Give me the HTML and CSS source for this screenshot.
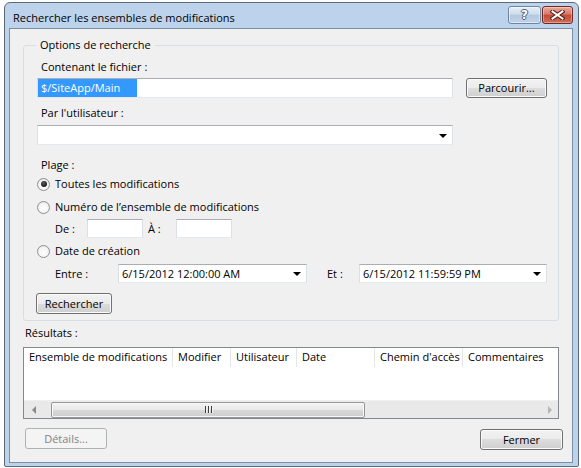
FILE: index.html
```html
<!DOCTYPE html>
<html lang="fr">
<head>
<meta charset="utf-8">
<title>Rechercher les ensembles de modifications</title>
<link rel="stylesheet" href="styles.css">
</head>
<body>
<div class="window">
  <div class="titlebar">
    <span class="title">Rechercher les ensembles de modifications</span>
    <div class="caption">
      <div class="cbtn help"><span class="qmark">?</span></div>
      <div class="cbtn close">
        <svg width="15" height="10" viewBox="0 0 15 10"><path d="M2.5 1.5 L12.5 8.5 M12.5 1.5 L2.5 8.5" stroke="#5a1f18" stroke-width="4" stroke-linecap="square"/><path d="M2.5 1.5 L12.5 8.5 M12.5 1.5 L2.5 8.5" stroke="#ffffff" stroke-width="2" stroke-linecap="square"/></svg>
      </div>
    </div>
  </div>
  <div class="client">
    <fieldset class="group">
      <legend>Options de recherche</legend>
      <div class="lbl first">Contenant le fichier :</div>
      <div class="row file-row">
        <div class="textbox wide"><span class="sel">$/SiteApp/Main</span></div>
        <div class="btn browse">Parcourir...</div>
      </div>
      <div class="lbl second">Par l'utilisateur :</div>
      <div class="combo wide user-combo"><span class="val"></span><span class="arrow"></span></div>
      <div class="lbl plage">Plage :</div>
      <div class="radio-row r1"><span class="radio checked"></span><span>Toutes les modifications</span></div>
      <div class="radio-row r2"><span class="radio"></span><span>Numéro de l’ensemble de modifications</span></div>
      <div class="row sub-row de-row">
        <span class="sublbl de">De :</span>
        <div class="textbox small"></div>
        <span class="sublbl a">À :</span>
        <div class="textbox small"></div>
      </div>
      <div class="radio-row r3"><span class="radio"></span><span>Date de création</span></div>
      <div class="row sub-row date-row">
        <span class="sublbl entre">Entre :</span>
        <div class="combo date1"><span class="val">6/15/2012 12:00:00 AM</span><span class="arrow"></span></div>
        <span class="sublbl et">Et :</span>
        <div class="combo date2"><span class="val">6/15/2012 11:59:59 PM</span><span class="arrow"></span></div>
      </div>
      <div class="btn search">Rechercher</div>
    </fieldset>
    <div class="results-lbl">Résultats :</div>
    <div class="listview">
      <div class="lv-header">
        <div class="col c1">Ensemble de modifications</div>
        <div class="col c2">Modifier</div>
        <div class="col c3">Utilisateur</div>
        <div class="col c4">Date</div>
        <div class="col c5">Chemin d'accès</div>
        <div class="col c6">Commentaires</div>
      </div>
      <div class="lv-body"></div>
      <div class="hscroll">
        <div class="sarrow left"><span class="tri-left"></span></div>
        <div class="strack">
          <div class="thumb"><span class="grip"><i></i><i></i><i></i></span></div>
        </div>
        <div class="sarrow right"><span class="tri-right"></span></div>
      </div>
    </div>
    <div class="bottom-row">
      <div class="btn details disabled">Détails...</div>
      <div class="btn close-btn">Fermer</div>
    </div>
  </div>
</div>
</body>
</html>
```
FILE: styles.css
```css
* { box-sizing: border-box; }
html, body { margin: 0; padding: 0; background: #ffffff; }
body {
  font-family: "Open Sans", "Noto Sans", "DejaVu Sans", sans-serif;
  font-size: 11px;
  color: #000;
  line-height: 16px;
}

.window {
  margin: 2px 0 0 4px;
  width: 575px;
  height: 465px;
  border: 1px solid #5d6a79;
  border-radius: 6px 6px 2px 2px;
  background: #bdd3ec;
  padding: 0 5px 3px 4px;
  display: flex;
  flex-direction: column;
}

.titlebar {
  height: 25px;
  display: flex;
  align-items: flex-start;
  padding-left: 4px;
  flex: none;
}
.title { margin-top: 7px; white-space: nowrap; font-size: 11px; }
.caption { margin-left: auto; display: flex; gap: 1px; margin-top: 3px; }
.cbtn {
  height: 18px;
  border-radius: 3px;
  display: flex;
  align-items: center;
  justify-content: center;
}
.help {
  width: 33px;
  border: 1px solid #6f86a3;
  background: linear-gradient(#e6eef8 0%, #cfdcec 45%, #b4c8e0 50%, #bfd2e9 100%);
  box-shadow: inset 0 0 0 1px rgba(255,255,255,0.5);
}
.qmark {
  font-family: "DejaVu Sans", sans-serif;
  font-weight: bold;
  font-size: 12px;
  line-height: 14px;
  color: #ffffff;
  text-shadow: 1px 0 0 #4c5d73, -1px 0 0 #4c5d73, 0 1px 0 #4c5d73, 0 -1px 0 #4c5d73;
}
.close {
  width: 31px;
  border: 1px solid #6e2a22;
  background: linear-gradient(#e9a99c 0%, #d7796a 45%, #c44a38 50%, #cf6e56 100%);
  box-shadow: inset 0 0 0 1px rgba(255,255,255,0.35);
}
.close svg { display: block; }

.client {
  flex: 1;
  background: #f0f0f0;
  border: 1px solid #7d8fa6;
  display: flex;
  flex-direction: column;
  align-items: flex-start;
}

/* group box */
.group {
  margin: 8px 0 0 13px;
  width: 536px;
  border: 1px solid #d5dfe5;
  border-radius: 3px;
  padding: 0 0 6px 13px;
  min-width: 0;
}
.group legend {
  margin-left: -1px;
  padding: 0 4px;
  line-height: 16px;
}

.lbl { padding-left: 4px; line-height: 16px; }
.lbl.first { margin-top: 6px; }
.lbl.second { margin-top: 7px; }
.lbl.plage { margin-top: 12px; }

.row { display: flex; align-items: center; }
.file-row { margin-top: 3px; }

.textbox {
  height: 20px;
  background: #fff;
  border: 1px solid #e3e9ef;
  border-top-color: #abadb3;
  border-left-color: #dbdfe6;
  border-right-color: #dbdfe6;
}
.textbox.wide { width: 416px; }
.sel {
  display: inline-block;
  width: 99px;
  height: 18px;
  line-height: 18px;
  padding-left: 3px;
  background: #3399ff;
  color: #fff;
}

.btn {
  height: 21px;
  border: 1px solid #707070;
  border-radius: 3px;
  background: linear-gradient(#f2f2f2 0%, #ebebeb 50%, #dddddd 50%, #cfcfcf 100%);
  box-shadow: inset 0 0 0 1px #fbfbfb;
  display: flex;
  align-items: center;
  justify-content: center;
  line-height: 16px;
}
.browse { width: 81px; margin-left: 13px; height: 20px; margin-top: -1px; }

.combo {
  position: relative;
  height: 20px;
  background: #fff;
  border: 1px solid #e3e9ef;
  border-top-color: #abadb3;
  border-left-color: #dbdfe6;
  border-right-color: #dbdfe6;
  display: flex;
  align-items: center;
}
.combo.wide { width: 416px; }
.user-combo { margin-top: 4px; }
.combo .val { padding-left: 3px; flex: 1; white-space: nowrap; }
.arrow {
  width: 0; height: 0;
  border-left: 4px solid transparent;
  border-right: 4px solid transparent;
  border-top: 4px solid #000;
  margin-right: 5px;
  margin-top: 1px;
}

.radio-row { display: flex; align-items: center; height: 16px; }
.r1 { margin-top: 3px; }
.r2 { margin-top: 7px; }
.r3 { margin-top: 5px; }
.radio {
  width: 13px;
  height: 13px;
  border-radius: 50%;
  border: 1px solid #8c8f94;
  background: radial-gradient(circle at 50% 60%, #fefefe 0%, #f4f4f4 55%, #dcdcdc 100%);
  margin-right: 5px;
  display: flex;
  align-items: center;
  justify-content: center;
  flex: none;
}
.radio.checked::after {
  content: "";
  width: 6px;
  height: 6px;
  border-radius: 50%;
  background: radial-gradient(circle at 40% 35%, #5a5a5a 0%, #1c1c1c 70%);
}

.sub-row { padding-left: 18px; }
.de-row { margin-top: 4px; }
.de-row .textbox { width: 56px; height: 19px; }
.sublbl { display: inline-block; }
.de { width: 32px; }
.a { width: 28px; margin-left: 5px; }
.date-row { margin-top: 5px; }
.date-row .combo { height: 19px; }
.entre { width: 63px; }
.date1 { width: 189px; }
.et { width: 32px; margin-left: 20px; }
.date2 { width: 188px; }

.search { width: 76px; margin-top: 10px; margin-left: -1px; }

.results-lbl { margin: 4px 0 0 15px; line-height: 16px; }

.listview {
  margin: 6px 0 0 13px;
  width: 536px;
  height: 72px;
  border: 1px solid #828790;
  background: #fff;
  display: flex;
  flex-direction: column;
}
.lv-header { display: flex; height: 19px; flex: none; }
.col {
  padding-left: 5px;
  white-space: nowrap;
  border-right: 1px solid #e5e5e5;
  line-height: 18px;
  overflow: hidden;
}
.c1 { width: 149px; }
.c2 { width: 58px; }
.c3 { width: 66px; }
.c4 { width: 78px; }
.c5 { width: 88px; }
.c6 { flex: 1; border-right: none; }
.lv-body { flex: 1; }

.hscroll {
  height: 18px;
  flex: none;
  display: flex;
  background: #e9e9e9;
  border-top: 1px solid #f0f0f0;
}
.sarrow { width: 17px; display: flex; align-items: center; justify-content: center; flex: none; }
.tri-left {
  width: 0; height: 0;
  border-top: 4px solid transparent;
  border-bottom: 4px solid transparent;
  border-right: 4px solid #8a8a8a;
  margin-left: 2px;
}
.tri-right {
  width: 0; height: 0;
  border-top: 4px solid transparent;
  border-bottom: 4px solid transparent;
  border-left: 4px solid #b5b5b5;
}
.strack { flex: 1; display: flex; align-items: center; padding-left: 10px; }
.thumb {
  width: 314px;
  height: 16px;
  border: 1px solid #979797;
  border-radius: 2px;
  background: linear-gradient(#f3f3f3 0%, #e8e8e8 50%, #d8d8d8 51%, #cdcdcd 100%);
  box-shadow: inset 0 0 0 1px #f8f8f8;
  display: flex;
  align-items: center;
  justify-content: center;
}
.grip { display: flex; gap: 1px; }
.grip i { display: block; width: 1px; height: 7px; background: #3c3c3c; box-shadow: 1px 0 0 #f4f4f4; }
.grip i + i { margin-left: 1px; }

.bottom-row {
  margin-top: 9px;
  width: 100%;
  display: flex;
  align-items: flex-start;
  padding-left: 15px;
  padding-right: 9px;
}
.details { width: 82px; }
.disabled {
  border-color: #adb2b5;
  background: #f4f4f4;
  color: #838383;
  box-shadow: none;
}
.close-btn { width: 83px; margin-left: auto; margin-top: 1px; }
```
